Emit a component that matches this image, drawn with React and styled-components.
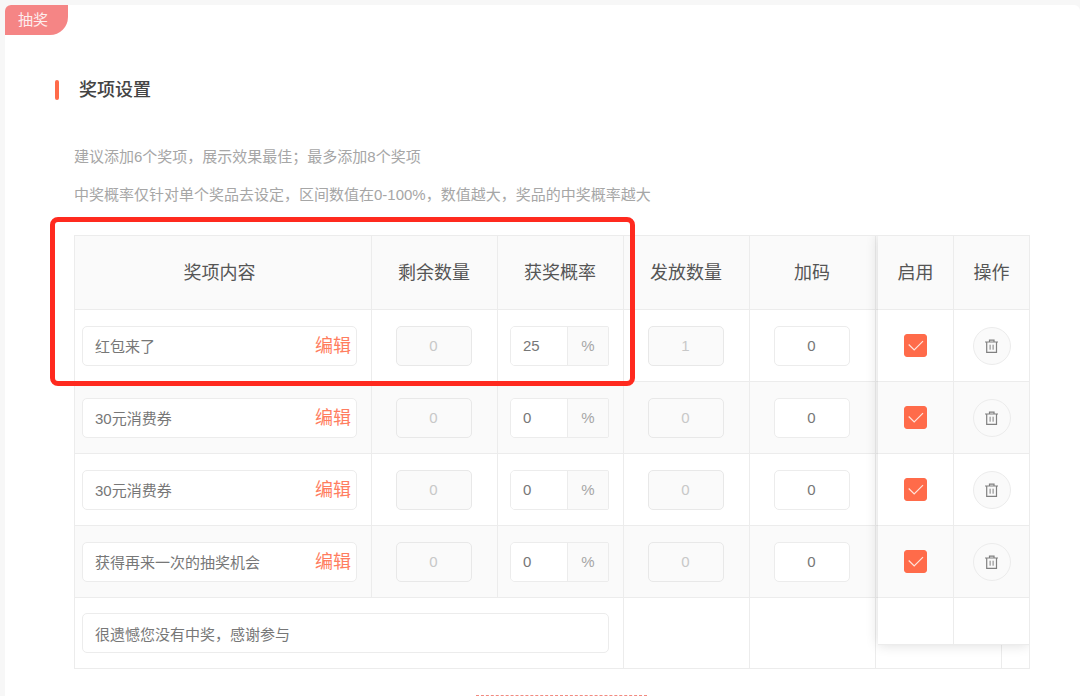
import { useState } from "react";
import styled, { createGlobalStyle } from "styled-components";

const GlobalStyle = createGlobalStyle`
  * {
    box-sizing: border-box;
  }
  body {
    margin: 0;
    background: #f7f7f7;
    font-family: "Liberation Sans", "Noto Sans CJK SC", sans-serif;
    font-size: 15px;
    color: #777;
  }
  input,
  button {
    font: inherit;
    color: inherit;
  }
`;

const Page = styled.div`
  height: 100vh;
  padding: 5px 0 0 5px;
  overflow: hidden;
`;

const Card = styled.main`
  min-height: 100%;
  background: white;
  border-radius: 6px;
`;

const Tag = styled.div`
  width: fit-content;
  height: 30px;
  padding: 0 20px 0 13px;
  line-height: 29px;
  color: #fdeeee;
  background: #f58585;
  border-radius: 6px 0 18px 0;
`;

const Title = styled.h2`
  display: flex;
  align-items: center;
  gap: 20px;
  margin: 44px 0 37px 50px;
  font-size: 18px;
  line-height: 22px;
  font-weight: 500;
  color: #444;

  &::before {
    content: "";
    width: 4px;
    height: 20px;
    border-radius: 2px;
    background: #ff6b4a;
  }
`;

const Content = styled.div`
  padding: 0 50px 0 69px;
`;

const Hint = styled.p`
  margin: 0;
  line-height: 38px;
  color: #a6a6a6;
`;

const TableArea = styled.div`
  position: relative;
  margin: 21px 0 26px;
`;

const TableClip = styled.div`
  position: relative;
  overflow: hidden;
  border: 1px solid #ececec;
  border-bottom: 0;
`;

const Table = styled.table`
  width: 100%;
  table-layout: fixed;
  border-collapse: separate;
  border-spacing: 0;
`;

const Col = styled.col`
  width: ${(props) => props.$width};
`;

const Th = styled.th`
  height: 74px;
  padding: 0 ${(props) => (props.$wide ? "7px" : "1px")} 3px 0;
  font-size: 18px;
  font-weight: 400;
  color: #555;
  background: #fafafa;
  border-right: 1px solid #ececec;
  border-bottom: 1px solid #ececec;

  &:last-child {
    border-right: 0;
  }
`;

const Row = styled.tr`
  background: ${(props) => (props.$striped ? "#fafafa" : "white")};
`;

const Td = styled.td`
  height: ${(props) => props.$height || "72px"};
  padding: 0 14px 0 ${(props) => (props.$wide ? "7px" : "12px")};
  text-align: center;
  border-right: 1px solid #ececec;
  border-bottom: 1px solid #ececec;

  &:last-child {
    border-right: 0;
  }
`;

const FixedColumns = styled.div`
  position: absolute;
  top: 0;
  right: 0;
  width: 151px;
  background: white;
  box-shadow: 0 0 12px rgba(0, 0, 0, 0.14);

  ${Th} {
    padding-right: 0;
  }
  ${Td} {
    padding: 0;
  }
`;

const NameBox = styled.div`
  display: flex;
  align-items: center;
  height: 40px;
  padding: 0 5px 0 0;
  background: white;
  border: 1px solid #ececec;
  border-radius: 5px;
`;

const NameInput = styled.input`
  flex: 1;
  min-width: 0;
  height: 100%;
  padding: 0 12px;
  border: 0;
  outline: none;
  background: transparent;
`;

const EditButton = styled.button`
  padding: 0;
  border: 0;
  background: none;
  font-size: 18px;
  line-height: 24px;
  color: #ff7d60;
  cursor: pointer;
`;

const NumberInput = styled.input`
  display: block;
  width: 76px;
  height: 40px;
  margin: 0 auto;
  padding: 0;
  text-align: center;
  background: white;
  border: 1px solid #ececec;
  border-radius: 5px;

  &:disabled {
    color: #c8c8c8;
    background: #fafafa;
    border-color: #e8e8e8;
  }
`;

const RateBox = styled.label`
  display: flex;
  height: 40px;
  overflow: hidden;
  border: 1px solid #ececec;
  border-radius: 5px 2px 2px 5px;
`;

const RateInput = styled.input`
  flex: 1;
  min-width: 0;
  padding: 0 12px;
  border: 0;
  outline: none;
  background: white;
`;

const RateUnit = styled.span`
  width: 41px;
  line-height: 38px;
  color: #a6a6a6;
  background: #fafafa;
  border-left: 1px solid #ececec;
`;

const CheckLabel = styled.label`
  display: grid;
  place-items: center;

  & > * {
    grid-area: 1 / 1;
  }
  svg {
    pointer-events: none;
  }
`;

const Checkbox = styled.input`
  appearance: none;
  width: 23px;
  height: 23px;
  margin: 0;
  border: 1px solid #ff6b4a;
  border-radius: 3px;
  background: white;

  &:checked {
    background: #ff6b4a;
  }
`;

const DeleteButton = styled.button`
  display: flex;
  align-items: center;
  justify-content: center;
  width: 38px;
  height: 38px;
  margin: 0 auto;
  padding: 0;
  color: #808080;
  background: #fafafa;
  border: 1px solid #ececec;
  border-radius: 50%;
  cursor: pointer;
`;

const Highlight = styled.div`
  position: absolute;
  top: -18px;
  left: -24px;
  right: 395px;
  height: 169px;
  border: 5px solid #ff2a1f;
  border-radius: 8px;
  pointer-events: none;
`;

const Footer = styled.div`
  padding-left: 18px;
`;

const AddButton = styled.button`
  display: block;
  width: 171px;
  height: 40px;
  margin: 0 auto;
  background: white;
  border: 1px dashed #f28a80;
`;

const CheckIcon = () => (
  <svg width="23" height="23" viewBox="0 0 23 23" fill="none" stroke="#ffe4dc" strokeWidth="1.2">
    <path d="M4.7 10.5 L10.2 16 L19 7.2" />
  </svg>
);

const TrashIcon = () => (
  <svg width="13" height="14" viewBox="0 0 13 14" fill="none" stroke="currentColor">
    <path d="M0 3h13M4.5 3V1.2h4.5V3M1.7 3v10.4h9.8V3" strokeWidth="1.2" />
    <path d="M5.1 5.7v5M8.1 5.7v5" />
  </svg>
);

const initialPrizes = [
  { id: 1, name: "红包来了", left: 0, rate: "25", sent: 1, extra: "0", enabled: true },
  { id: 2, name: "30元消费券", left: 0, rate: "0", sent: 0, extra: "0", enabled: true },
  { id: 3, name: "30元消费券", left: 0, rate: "0", sent: 0, extra: "0", enabled: true },
  { id: 4, name: "获得再来一次的抽奖机会", left: 0, rate: "0", sent: 0, extra: "0", enabled: true },
];

export const App = () => {
  const [prizes, setPrizes] = useState(initialPrizes);
  const [missText, setMissText] = useState("很遗憾您没有中奖，感谢参与");

  const update = (id, field, value) => {
    setPrizes(prizes.map((p) => (p.id === id ? { ...p, [field]: value } : p)));
  };

  return (
    <Page lang="zh-CN">
      <GlobalStyle />
      <Card>
        <Tag>抽奖</Tag>
        <Title>奖项设置</Title>
        <Content>
          <Hint>建议添加6个奖项，展示效果最佳；最多添加8个奖项</Hint>
          <Hint>中奖概率仅针对单个奖品去设定，区间数值在0-100%，数值越大，奖品的中奖概率越大</Hint>
          <TableArea>
            <TableClip>
              <Table>
                <colgroup>
                  <Col $width="auto" />
                  <Col $width="126px" />
                  <Col $width="126px" />
                  <Col $width="126px" />
                  <Col $width="126px" />
                  <Col $width="126px" />
                  <Col $width="27px" />
                </colgroup>
                <thead>
                  <tr>
                    <Th $wide>奖项内容</Th>
                    <Th>剩余数量</Th>
                    <Th>获奖概率</Th>
                    <Th>发放数量</Th>
                    <Th>加码</Th>
                    <Th />
                    <Th />
                  </tr>
                </thead>
                <tbody>
                  {prizes.map((p, i) => (
                    <Row key={p.id} $striped={i % 2 === 1}>
                      <Td $wide>
                        <NameBox>
                          <NameInput
                            aria-label="奖项内容"
                            value={p.name}
                            onChange={(e) => update(p.id, "name", e.target.value)}
                          />
                          <EditButton type="button">编辑</EditButton>
                        </NameBox>
                      </Td>
                      <Td>
                        <NumberInput aria-label="剩余数量" value={p.left} disabled />
                      </Td>
                      <Td>
                        <RateBox>
                          <RateInput
                            aria-label="获奖概率"
                            value={p.rate}
                            onChange={(e) => update(p.id, "rate", e.target.value)}
                          />
                          <RateUnit>%</RateUnit>
                        </RateBox>
                      </Td>
                      <Td>
                        <NumberInput aria-label="发放数量" value={p.sent} disabled />
                      </Td>
                      <Td>
                        <NumberInput
                          aria-label="加码"
                          value={p.extra}
                          onChange={(e) => update(p.id, "extra", e.target.value)}
                        />
                      </Td>
                      <Td />
                      <Td />
                    </Row>
                  ))}
                  <Row>
                    <Td colSpan={3} $wide $height="71px">
                      <NameBox>
                        <NameInput
                          aria-label="未中奖提示"
                          value={missText}
                          onChange={(e) => setMissText(e.target.value)}
                        />
                      </NameBox>
                    </Td>
                    <Td $height="71px" />
                    <Td $height="71px" />
                    <Td $height="71px" />
                    <Td $height="71px" />
                  </Row>
                </tbody>
              </Table>
              <FixedColumns>
                <Table>
                  <colgroup>
                    <Col $width="76px" />
                    <Col $width="75px" />
                  </colgroup>
                  <thead>
                    <tr>
                      <Th>启用</Th>
                      <Th>操作</Th>
                    </tr>
                  </thead>
                  <tbody>
                    {prizes.map((p, i) => (
                      <Row key={p.id} $striped={i % 2 === 1}>
                        <Td>
                          <CheckLabel>
                            <Checkbox
                              type="checkbox"
                              aria-label="启用"
                              checked={p.enabled}
                              onChange={(e) => update(p.id, "enabled", e.target.checked)}
                            />
                            {p.enabled && <CheckIcon />}
                          </CheckLabel>
                        </Td>
                        <Td>
                          <DeleteButton
                            type="button"
                            aria-label="删除"
                            onClick={() => setPrizes(prizes.filter((x) => x.id !== p.id))}
                          >
                            <TrashIcon />
                          </DeleteButton>
                        </Td>
                      </Row>
                    ))}
                    <Row>
                      <Td $height="47px" />
                      <Td $height="47px" />
                    </Row>
                  </tbody>
                </Table>
              </FixedColumns>
            </TableClip>
            <Highlight />
          </TableArea>
          <Footer>
            <AddButton type="button" aria-label="添加奖项" />
          </Footer>
        </Content>
      </Card>
    </Page>
  );
};

export default App;
